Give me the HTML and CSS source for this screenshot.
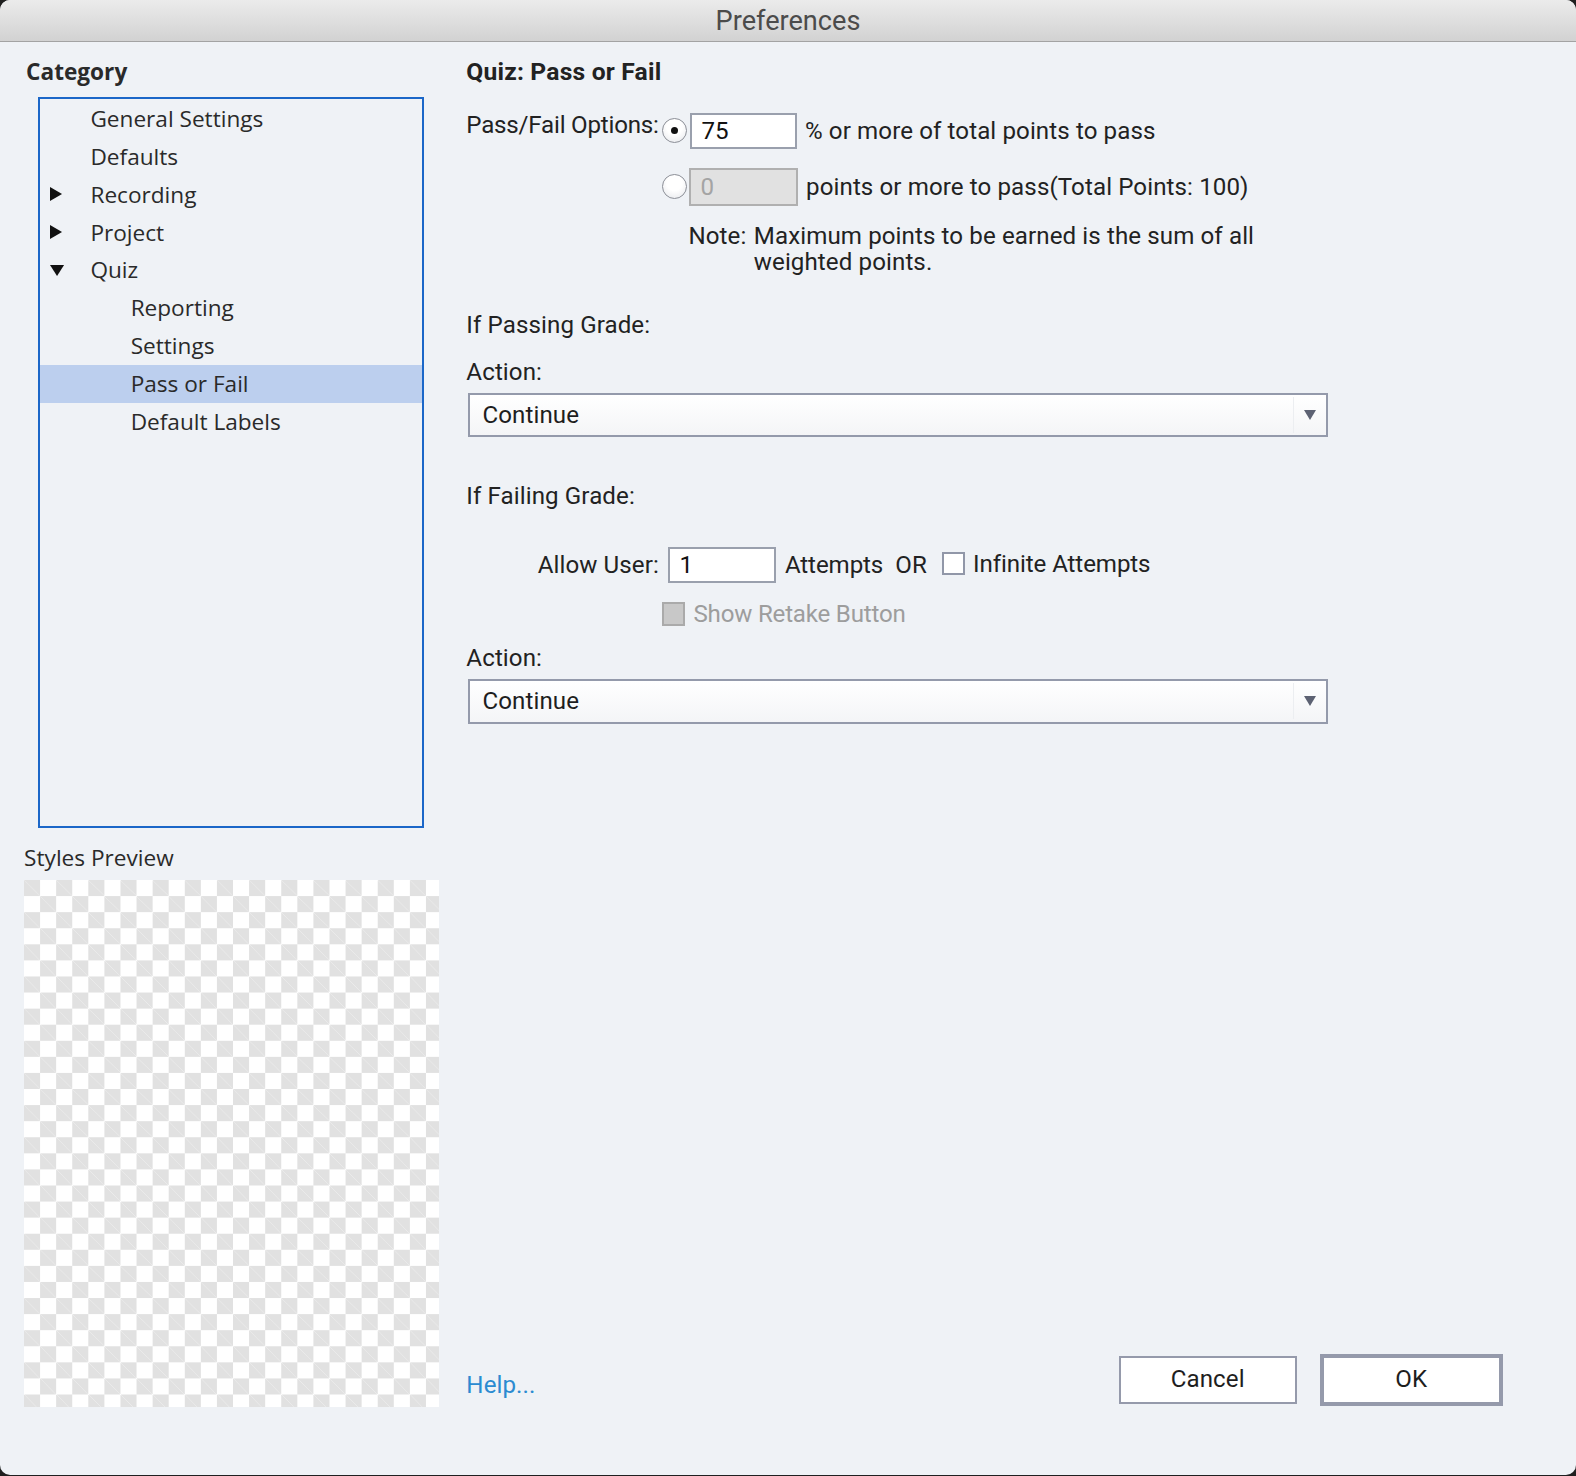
FILE: index.html
```html
<!DOCTYPE html>
<html>
<head>
<meta charset="utf-8">
<title>Preferences</title>
<link rel="stylesheet" href="styles.css">
</head>
<body>
<div class="window">
  <div class="titlebar">Preferences</div>
  <div class="content">
    <div class="left">
      <div class="cat-title">Category</div>
      <div class="tree">
        <div class="row"><span class="tw"></span><span class="lbl">General Settings</span></div>
        <div class="row"><span class="tw"></span><span class="lbl">Defaults</span></div>
        <div class="row"><span class="tw"><svg width="14" height="16" viewBox="0 0 14 16"><path d="M1 1 L13 8 L1 15 Z" fill="#111"/></svg></span><span class="lbl">Recording</span></div>
        <div class="row"><span class="tw"><svg width="14" height="16" viewBox="0 0 14 16"><path d="M1 1 L13 8 L1 15 Z" fill="#111"/></svg></span><span class="lbl">Project</span></div>
        <div class="row"><span class="tw"><svg width="16" height="14" viewBox="0 0 16 14"><path d="M1 2 L15 2 L8 13 Z" fill="#111"/></svg></span><span class="lbl">Quiz</span></div>
        <div class="row sub"><span class="tw"></span><span class="lbl">Reporting</span></div>
        <div class="row sub"><span class="tw"></span><span class="lbl">Settings</span></div>
        <div class="row sub selected"><span class="tw"></span><span class="lbl">Pass or Fail</span></div>
        <div class="row sub"><span class="tw"></span><span class="lbl">Default Labels</span></div>
      </div>
      <div class="preview-title">Styles Preview</div>
      <div class="checker"></div>
    </div>
    <div class="right">
      <div class="page-title">Quiz: Pass or Fail</div>
      <div class="pf-row first">
        <div class="pf-label">Pass/Fail Options:</div>
        <span class="radio checked"></span>
        <div class="field">75</div>
        <div class="pf-text">% or more of total points to pass</div>
      </div>
      <div class="pf-row second">
        <span class="radio"></span>
        <div class="field disabled">0</div>
        <div class="pf-text">points or more to pass(Total Points: 100)</div>
      </div>
      <div class="note">
        <span class="note-key">Note:</span>
        <span class="note-body">Maximum points to be earned is the sum of all weighted points.</span>
      </div>
      <div class="section passing">If Passing Grade:</div>
      <div class="label action">Action:</div>
      <div class="select"><span>Continue</span><span class="sep"></span><span class="arrow"></span></div>
      <div class="section failing">If Failing Grade:</div>
      <div class="allow-row">
        <span class="allow-label">Allow User:</span>
        <div class="field small">1</div>
        <span class="attempts">Attempts</span>
        <span class="or">OR</span>
        <span class="checkbox"></span>
        <span class="inf">Infinite Attempts</span>
      </div>
      <div class="retake-row">
        <span class="checkbox disabled"></span>
        <span class="retake">Show Retake Button</span>
      </div>
      <div class="label action2">Action:</div>
      <div class="select"><span>Continue</span><span class="sep"></span><span class="arrow"></span></div>
      <div class="bottom">
        <span class="help">Help...</span>
        <div class="buttons">
          <div class="btn cancel">Cancel</div>
          <div class="btn ok">OK</div>
        </div>
      </div>
    </div>
  </div>
</div>
</body>
</html>
```
FILE: styles.css
```css
html {
  margin: 0;
  padding: 0;
  overflow: hidden;
  background: #1f1f1f;
}
body {
  margin: 0;
  padding: 0;
  background: #1f1f1f;
  overflow: hidden;
  zoom: 1.0051;
}
.window {
  width: 1568px;
  height: 1468px;
  background: #eff2f6;
  border-radius: 10px;
  overflow: hidden;
  display: flex;
  flex-direction: column;
}
.titlebar {
  height: 41px;
  border-bottom: 1px solid #a3a3a3;
  background: linear-gradient(#ebebeb, #d2d2d2);
  text-align: center;
  font-family: Roboto, "Liberation Sans", sans-serif;
  font-size: 27px;
  line-height: 42px;
  color: #4b4b4b;
  flex: none;
}
.content {
  flex: 1;
  display: flex;
}
.left {
  width: 416px;
  padding-left: 24px;
  display: flex;
  flex-direction: column;
  font-family: "Open Sans", "DejaVu Sans", sans-serif;
  font-size: 22.5px;
  color: #2a2a2a;
}
.cat-title {
  margin-top: 15px;
  padding-left: 2px;
  line-height: 30px;
  font-weight: 700;
  font-size: 22.5px;
}
.tree {
  margin-top: 10px;
  margin-left: 14px;
  width: 384px;
  height: 727px;
  box-sizing: border-box;
  border: 2px solid #1b67c8;
}
.row {
  height: 37.7px;
  display: flex;
  align-items: center;
}
.row .tw {
  width: 50px;
  padding-left: 9px;
  box-sizing: border-box;
  display: flex;
  align-items: center;
}
.row.sub .lbl {
  padding-left: 40px;
}
.row.selected {
  background: #bccfee;
}
.preview-title {
  margin-top: 15px;
  line-height: 30px;
  font-size: 22.5px;
}
.checker {
  margin-top: 7px;
  width: 413px;
  height: 524px;
  background-color: #ffffff;
  background-image:
    linear-gradient(45deg, #e1e1e1 25%, transparent 25%, transparent 75%, #e1e1e1 75%),
    linear-gradient(45deg, #e1e1e1 25%, transparent 25%, transparent 75%, #e1e1e1 75%);
  background-size: 32px 32px;
  background-position: 16px 0, 0 16px;
}
.right {
  flex: 1;
  margin-left: 24px;
  display: flex;
  flex-direction: column;
  font-family: Roboto, "Liberation Sans", sans-serif;
  font-size: 24px;
  letter-spacing: 0.1px;
  color: #222;
}
.page-title {
  margin-top: 15px;
  line-height: 30px;
  font-weight: 700;
  font-size: 24.5px;
  letter-spacing: 0.2px;
}
.pf-row {
  display: flex;
  align-items: center;
}
.pf-row.first {
  margin-top: 25px;
  height: 36px;
}
.pf-row.second {
  margin-top: 19px;
  height: 38px;
  padding-left: 195px;
}
.pf-label {
  width: 195px;
  align-self: flex-start;
  line-height: 24px;
  white-space: nowrap;
  letter-spacing: -0.2px;
}
.radio {
  width: 25px;
  height: 25px;
  box-sizing: border-box;
  border: 1.5px solid #8c8f97;
  border-radius: 50%;
  background: radial-gradient(circle at 50% 35%, #ffffff 40%, #e4e6ea 100%);
  display: flex;
  align-items: center;
  justify-content: center;
  flex: none;
}
.radio.checked::after {
  content: "";
  width: 7px;
  height: 7px;
  border-radius: 50%;
  background: #111;
}
.field {
  margin-left: 3px;
  width: 106px;
  height: 36px;
  box-sizing: border-box;
  border: 2px solid #9aa0ad;
  background: #fff;
  padding-left: 9px;
  line-height: 32px;
  color: #111;
  flex: none;
}
.field.disabled {
  margin-left: 2px;
  width: 108px;
  height: 38px;
  background: #e1e1e1;
  border-color: #b0b0b0;
  color: #a4a4a4;
  line-height: 34px;
}
.pf-text {
  margin-left: 8px;
}
.note {
  margin-top: 17px;
  margin-left: 221px;
  display: flex;
  line-height: 26px;
}
.note-key {
  width: 65px;
  flex: none;
}
.note-body {
  width: 520px;
}
.section, .label {
  line-height: 30px;
}
.section.passing {
  margin-top: 34px;
}
.label.action {
  margin-top: 17px;
}
.select {
  margin-top: 6px;
  margin-left: 2px;
  width: 855px;
  height: 44px;
  box-sizing: border-box;
  border: 2px solid #949aab;
  background: linear-gradient(#ffffff, #f4f5f7);
  display: flex;
  align-items: center;
  padding-left: 12px;
  color: #1e1e1e;
}
.select span:first-child {
  flex: 1;
}
.select .sep {
  width: 1px;
  height: 36px;
  background: #eceef1;
  margin-right: 10px;
}
.select .arrow {
  width: 0;
  height: 0;
  border-left: 6.5px solid transparent;
  border-right: 6.5px solid transparent;
  border-top: 10px solid #5d6273;
  margin-right: 10px;
}
.section.failing {
  margin-top: 44px;
}
.allow-row {
  margin-top: 35px;
  height: 36px;
  display: flex;
  align-items: center;
  padding-left: 71px;
}
.allow-label {
  width: 130px;
  white-space: nowrap;
}
.field.small {
  margin-left: 0;
  width: 107px;
}
.attempts {
  margin-left: 9px;
  letter-spacing: -0.1px;
}
.or {
  margin-left: 12px;
}
.checkbox {
  width: 23px;
  height: 23px;
  box-sizing: border-box;
  border: 2px solid #9197a8;
  background: #fff;
  margin-left: 15px;
  margin-top: -2px;
  flex: none;
}
.inf {
  margin-left: 8px;
  margin-top: -2px;
  letter-spacing: -0.1px;
}
.retake-row {
  margin-top: 18px;
  height: 26px;
  display: flex;
  align-items: center;
  padding-left: 195px;
}
.checkbox.disabled {
  margin-left: 0;
  margin-top: 0;
  width: 23px;
  height: 23px;
  background: #c8c8c8;
  border-color: #aaaaaa;
}
.retake {
  margin-left: 8px;
  color: #9d9d9d;
  letter-spacing: -0.2px;
}
.label.action2 {
  margin-top: 16px;
}
.bottom {
  margin-top: auto;
  margin-bottom: 70px;
  display: flex;
  align-items: center;
  justify-content: space-between;
  height: 50px;
  padding-right: 73px;
}
.help {
  color: #2b8bd1;
  padding-top: 10px;
}
.buttons {
  display: flex;
  align-items: center;
  gap: 23px;
}
.btn {
  box-sizing: border-box;
  background: #fff;
  text-align: center;
  color: #1e1e1e;
}
.btn.cancel {
  width: 177px;
  height: 47px;
  border: 2px solid #959aab;
  line-height: 43px;
}
.btn.ok {
  width: 182px;
  height: 51px;
  border: 4px solid #959aab;
  line-height: 43px;
}
```
